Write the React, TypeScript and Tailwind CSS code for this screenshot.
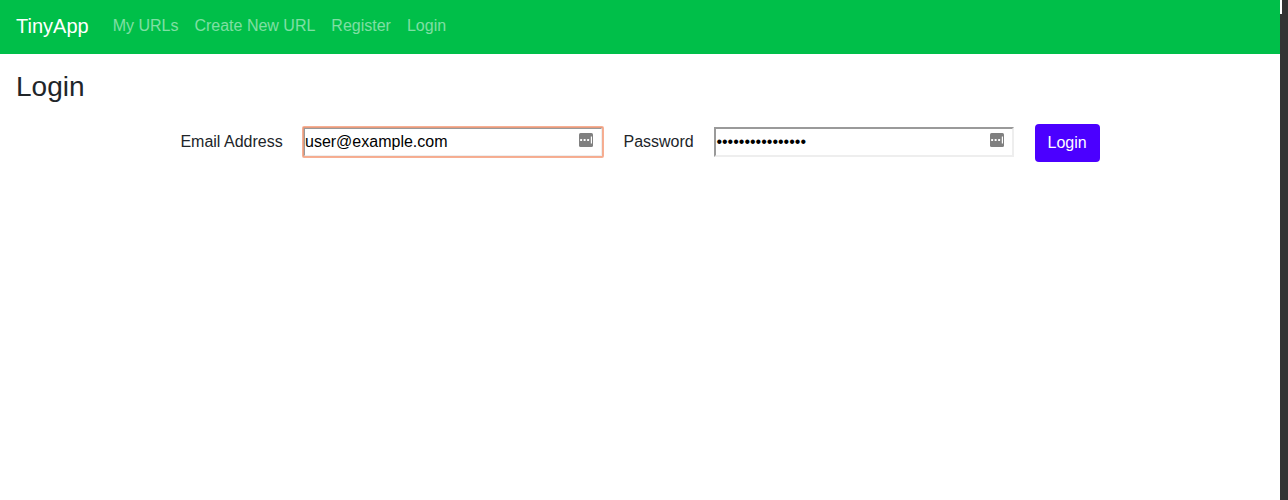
import { useState } from "react";

const links = ["My URLs", "Create New URL", "Register", "Login"];

function KeyBadge() {
  return (
    <svg
      className="pointer-events-none absolute right-[10px] top-[6px] h-[14px] w-[14px]"
      viewBox="0 0 14 14"
      aria-hidden="true"
    >
      <rect width="14" height="14" rx="1.5" fill="#808080" />
      <rect x="1.1" y="6" width="2" height="2" rx="0.5" fill="#fff" />
      <rect x="4.6" y="6" width="2" height="2" rx="0.5" fill="#fff" />
      <rect x="8.1" y="6" width="2" height="2" rx="0.5" fill="#fff" />
      <rect x="11.8" y="3.5" width="1.2" height="7" fill="#fff" />
    </svg>
  );
}

function Field({
  type,
  initial,
  label,
  highlighted = false,
}: {
  type: string;
  initial: string;
  label: string;
  highlighted?: boolean;
}) {
  const [value, setValue] = useState(initial);
  return (
    <div className="relative h-[30px] w-[300px]">
      <input
        type={type}
        aria-label={label}
        value={value}
        onChange={(e) => setValue(e.target.value)}
        className={
          highlighted
            ? "block h-[30px] w-[300px] rounded-[1px] border-2 border-t-[#9a9a9a] border-l-[#9a9a9a] border-r-[#eeeeee] border-b-[#eeeeee] bg-white p-0 text-base text-black outline-2 -outline-offset-1 outline-[#f59b78]/80"
            : "block h-[30px] w-[300px] border-2 border-t-[#9a9a9a] border-l-[#9a9a9a] border-r-[#eeeeee] border-b-[#eeeeee] bg-white p-0 pl-[0.4px] text-base text-black outline-none"
        }
      />
      <KeyBadge />
    </div>
  );
}

export default function App() {
  return (
    <div className="flex h-[500px] w-full bg-white font-['Liberation_Sans',Arial,sans-serif] text-base text-[#212529]">
      <div className="min-w-0 flex-1">
        <nav className="flex h-[54px] items-center bg-[#00bf49] px-4">
          <a className="mr-4 pb-[2px] text-xl leading-[30px] text-white">TinyApp</a>
          <ul className="flex pb-[3px]">
            {links.map((link) => (
              <li key={link} className="px-2 leading-6 text-white/50">
                {link}
              </li>
            ))}
          </ul>
        </nav>
        <main>
          <h1 className="px-4 pt-4 text-[28px] leading-[34px]">Login</h1>
          <form className="mt-5 flex h-[38px] pl-[180.4px]" onSubmit={(e) => e.preventDefault()}>
            <label className="w-[122.6px] pt-[6px] leading-6">Email Address</label>
            <div className="pt-[3px]">
              <Field type="text" label="Email Address" initial="user@example.com" highlighted />
            </div>
            <label className="ml-[20.5px] w-[90.5px] pt-[6px] leading-6">Password</label>
            <div className="pt-[3px]">
              <Field type="password" label="Password" initial="purple-dinosaur1" />
            </div>
            <button
              type="submit"
              className="ml-[21px] h-[38px] w-[65px] rounded bg-[#4b00ff] pr-[0.8px] leading-6 text-white"
            >
              Login
            </button>
          </form>
        </main>
      </div>
      <div className="flex w-2 shrink-0 bg-[#333333]">
        <div className="h-[14px] w-[2px] bg-white" />
      </div>
    </div>
  );
}
